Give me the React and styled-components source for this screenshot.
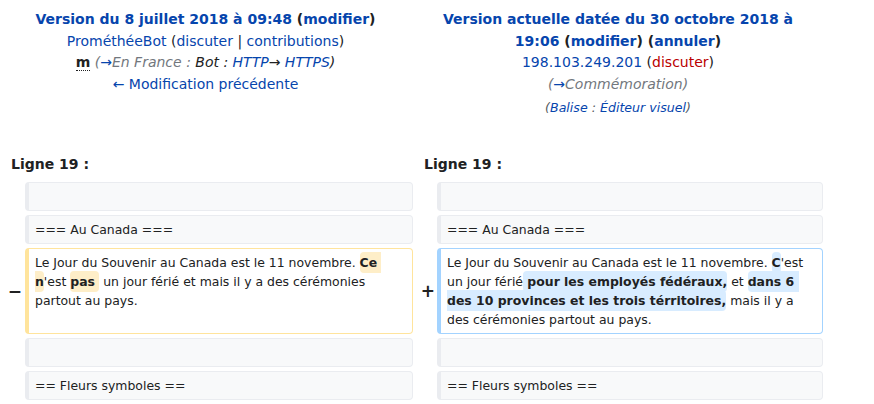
import React from 'react'
import styled, { createGlobalStyle } from 'styled-components'

const GlobalStyle = createGlobalStyle`
  body {
    margin: 0;
    background: #fff;
    font-family: "DejaVu Sans", sans-serif;
    color: #202122;
  }
`

const Diff = styled.div`
  display: grid;
  grid-template-columns: 25px 388px 24px 386px;
  row-gap: 4px;
  padding-top: 9px;
`

const Header = styled.div`
  grid-column: ${p => (p.side === 'new' ? '3 / 5' : '1 / 3')};
  padding: 0 6px 0 ${p => (p.side === 'new' ? '6px' : '4px')};
  text-align: center;
  font-size: 14px;
  line-height: 21.7px;
  color: #202122;
`

const Title = styled.div`
  font-weight: bold;
`

const Link = styled.a`
  color: ${p => (p.$red ? '#ba0000' : '#0645ad')};
  text-decoration: none;
  cursor: pointer;
`

const Minor = styled.abbr`
  font-weight: bold;
  text-decoration: none;
  border-bottom: 1px dotted #202122;
`

const Comment = styled.span`
  font-style: italic;
`

const Auto = styled.span`
  color: #72777d;
`

const Tags = styled.div`
  font-size: 12.6px;
  font-style: italic;
  color: #54595d;
  line-height: 22px;
  padding-top: 1px;
`

const LineNo = styled.div`
  grid-column: ${p => (p.side === 'new' ? '3 / 5' : '1 / 3')};
  padding: 30px 0 3px 11px;
  font-size: 14px;
  font-weight: bold;
  line-height: 22px;
`

const Marker = styled.div`
  display: flex;
  align-items: center;
  justify-content: flex-end;
  padding-right: ${p => (p.side === 'new' ? '2px' : '3px')};
  font-size: 17px;
  font-weight: bold;
  color: #202122;
`

const borders = {
  context: '#eaecf0',
  deleted: '#ffe49c',
  added: '#a3d3ff',
}

const Cell = styled.div`
  border: 1px solid ${p => borders[p.kind]};
  border-left-width: 4px;
  border-radius: 4px;
  background: ${p => (p.kind === 'context' ? '#f8f9fa' : '#fff')};
  padding: 4px 6px;
  min-height: 19px;
  font-size: 12.45px;
  line-height: 19px;
  white-space: pre-wrap;
  word-wrap: break-word;
  color: #202122;
`

const Change = styled.span`
  font-weight: bold;
  border-radius: 4px;
  padding: 3px 0;
  background: ${p => (p.kind === 'added' ? '#d8ecff' : '#feeec8')};
`

function ContextRow({ text }) {
  return (
    <>
      <Marker />
      <Cell kind="context">{text}</Cell>
      <Marker side="new" />
      <Cell kind="context">{text}</Cell>
    </>
  )
}

export default function App() {
  return (
    <>
      <GlobalStyle />
      <Diff>
        <Header side="old">
          <Title>
            <Link>Version du 8 juillet 2018 à 09:48</Link> (<Link>modifier</Link>)
          </Title>
          <div>
            <Link>ProméthéeBot</Link> (<Link>discuter</Link> | <Link>contributions</Link>)
          </div>
          <div>
            <Minor title="Modification mineure">m</Minor>{' '}
            <Comment>
              <Auto>(<Link>→</Link>En France :</Auto> Bot : <Link>HTTP</Link>→ <Link>HTTPS</Link>)
            </Comment>
          </div>
          <div>
            <Link>← Modification précédente</Link>
          </div>
        </Header>
        <Header side="new">
          <Title>
            <Link>Version actuelle datée du 30 octobre 2018 à 19:06</Link> (<Link>modifier</Link>) (<Link>annuler</Link>)
          </Title>
          <div>
            <Link>198.103.249.201</Link> (<Link $red>discuter</Link>)
          </div>
          <div>
            <Comment>
              <Auto>(<Link>→</Link>Commémoration)</Auto>
            </Comment>
          </div>
          <Tags>
            (<Link>Balise</Link> : <Link>Éditeur visuel</Link>)
          </Tags>
        </Header>

        <LineNo side="old">Ligne 19 :</LineNo>
        <LineNo side="new">Ligne 19 :</LineNo>

        <ContextRow text="" />
        <ContextRow text="=== Au Canada ===" />

        <Marker>−</Marker>
        <Cell kind="deleted">
          Le Jour du Souvenir au Canada est le 11 novembre. <Change kind="deleted">Ce n</Change>'est <Change kind="deleted">pas </Change> un jour férié et mais il y a des cérémonies partout au pays.
        </Cell>
        <Marker side="new">+</Marker>
        <Cell kind="added">
          Le Jour du Souvenir au Canada est le 11 novembre. <Change kind="added">C</Change>'est un jour férié<Change kind="added"> pour les employés fédéraux,</Change> et <Change kind="added">dans 6 des 10 provinces et les trois térritoires,</Change> mais il y a des cérémonies partout au pays.
        </Cell>

        <ContextRow text="" />
        <ContextRow text="== Fleurs symboles ==" />
      </Diff>
    </>
  )
}
